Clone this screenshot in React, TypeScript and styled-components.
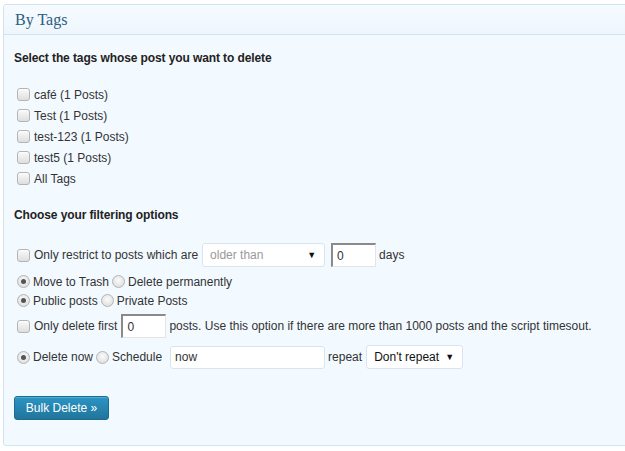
import React from 'react';
import styled, { createGlobalStyle } from 'styled-components';

const GlobalStyle = createGlobalStyle`
  body {
    margin: 0;
    background: #ffffff;
    overflow: hidden;
    font-family: "Liberation Sans", Arial, sans-serif;
  }
`;

const Page = styled.div`
  padding: 4px 0 0 3px;
`;

const Panel = styled.div`
  width: 640px;
  height: 442px;
  box-sizing: border-box;
  border: 1px solid #cfe4ef;
  border-radius: 3px;
  background: #f2f9ff;
  overflow: hidden;
`;

const PanelHeader = styled.div`
  height: 29px;
  display: flex;
  align-items: center;
  padding-left: 11px;
  border-bottom: 1px solid #cfe4ef;
  background: linear-gradient(to bottom, #f6fbff, #eef6fd);
`;

const Title = styled.h3`
  margin: 0;
  font-family: "Liberation Serif", "Times New Roman", serif;
  font-weight: normal;
  font-size: 16px;
  color: #2a5d80;
`;

const PanelBody = styled.div`
  padding: 13px 10px 0 10px;
  color: #333333;
  font-size: 12px;
`;

const Heading = styled.h4<{ $top?: number }>`
  margin: ${(p) => p.$top ?? 0}px 0 0 0;
  height: 20px;
  line-height: 20px;
  font-size: 12px;
  letter-spacing: -0.1px;
  font-weight: bold;
  color: #222222;
`;

const TagList = styled.div`
  margin-top: 16px;
  display: flex;
  flex-direction: column;
`;

const Row = styled.div<{ $top?: number; $height?: number }>`
  display: flex;
  align-items: center;
  height: ${(p) => p.$height ?? 21}px;
  margin-top: ${(p) => p.$top ?? 0}px;
  white-space: nowrap;
`;

const Label = styled.label`
  display: inline-flex;
  align-items: center;
`;

const Check = styled.input.attrs({ type: 'checkbox' })`
  appearance: none;
  width: 13px;
  height: 13px;
  margin: 0 4px 0 3px;
  border: 1px solid #b4b4b4;
  border-radius: 3px;
  background: linear-gradient(to bottom, #fafafa, #dedede);
  box-shadow: inset 0 1px 1px rgba(255, 255, 255, 0.8);
`;

const Radio = styled.input.attrs({ type: 'radio' })`
  appearance: none;
  width: 13px;
  height: 13px;
  margin: 0 3px 0 3px;
  border: 1px solid #b4b4b4;
  border-radius: 50%;
  background: radial-gradient(circle at 50% 40%, #fbfbfb, #d8d8d8);
  display: inline-grid;
  place-items: center;

  &:checked::after {
    content: '';
    width: 5px;
    height: 5px;
    border-radius: 50%;
    background: #555555;
  }
`;

const SelectBox = styled.div<{ $width: number; $muted?: boolean }>`
  width: ${(p) => p.$width}px;
  height: 24px;
  box-sizing: border-box;
  margin: 0 2px 0 4px;
  padding: 0 8px 0 7px;
  display: flex;
  align-items: center;
  justify-content: space-between;
  background: #ffffff;
  border: 1px solid #d8e5ee;
  border-radius: 3px;
  color: ${(p) => (p.$muted ? '#999999' : '#111111')};
`;

const Arrow = styled.span`
  font-size: 9px;
  color: #111111;
`;

const InsetInput = styled.input`
  width: 45px;
  height: 24px;
  box-sizing: border-box;
  margin: 0 3px 0 4px;
  padding: 0 4px;
  font: 12px "Liberation Sans", Arial, sans-serif;
  color: #333333;
  background: #ffffff;
  border: 2px solid;
  border-color: #8a8a8a #e4e4e4 #e4e4e4 #8a8a8a;
  border-width: 2px 1px 1px 2px;
`;

const TextInput = styled.input`
  width: 155px;
  height: 23px;
  box-sizing: border-box;
  margin: 0 3px 0 8px;
  padding: 0 4px;
  font: 12px "Liberation Sans", Arial, sans-serif;
  color: #333333;
  background: #ffffff;
  border: 1px solid #d8e5ee;
  border-radius: 3px;
`;

const BulkButton = styled.button`
  margin: 27px 0 0 0;
  width: 95px;
  height: 24px;
  padding: 0;
  font: 12px "Liberation Sans", Arial, sans-serif;
  color: #ffffff;
  background: linear-gradient(to bottom, #2a95c5, #21759b);
  border: 1px solid #1e6a8d;
  border-radius: 3px;
  box-shadow: inset 0 1px 0 rgba(120, 200, 230, 0.5);
`;

const tags = ['café (1 Posts)', 'Test (1 Posts)', 'test-123 (1 Posts)', 'test5 (1 Posts)', 'All Tags'];

export default function App() {
  return (
    <Page>
      <GlobalStyle />
      <Panel>
        <PanelHeader>
          <Title>By Tags</Title>
        </PanelHeader>
        <PanelBody>
          <Heading>Select the tags whose post you want to delete</Heading>
          <TagList>
            {tags.map((t) => (
              <Row key={t}>
                <Label>
                  <Check />
                  {t}
                </Label>
              </Row>
            ))}
          </TagList>

          <Heading $top={16}>Choose your filtering options</Heading>

          <Row $top={17} $height={26}>
            <Check />
            Only restrict to posts which are
            <SelectBox $width={123} $muted>
              older than <Arrow>▼</Arrow>
            </SelectBox>
            <InsetInput defaultValue="0" />
            days
          </Row>
          <Row $top={4} $height={19}>
            <Radio name="trash" defaultChecked />
            Move to Trash
            <Radio name="trash" />
            Delete permanently
          </Row>
          <Row $height={19}>
            <Radio name="visibility" defaultChecked />
            Public posts
            <Radio name="visibility" />
            Private Posts
          </Row>
          <Row $top={4} $height={24}>
            <Check />
            Only delete first
            <InsetInput defaultValue="0" />
            posts. Use this option if there are more than 1000 posts and the script timesout.
          </Row>
          <Row $top={7} $height={24}>
            <Radio name="when" defaultChecked />
            Delete now
            <Radio name="when" />
            Schedule
            <TextInput defaultValue="now" />
            repeat
            <SelectBox $width={97}>
              Don't repeat <Arrow>▼</Arrow>
            </SelectBox>
          </Row>
          <BulkButton>Bulk Delete »</BulkButton>
        </PanelBody>
      </Panel>
    </Page>
  );
}
